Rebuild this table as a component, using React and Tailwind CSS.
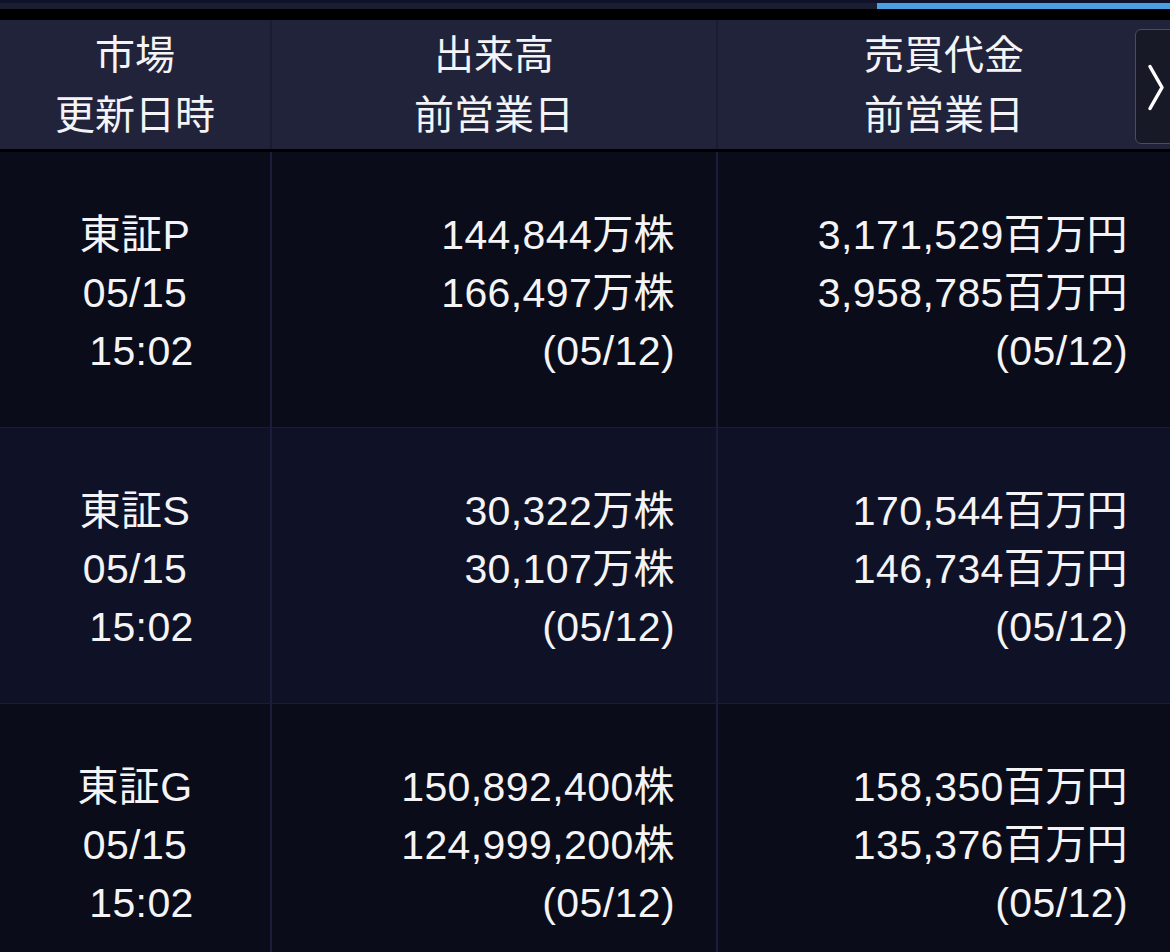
import React from 'react';

const rows = [
  {
    market: '東証P',
    volume: ['144,844万株', '166,497万株'],
    value: ['3,171,529百万円', '3,958,785百万円'],
    bg: 'bg-[#0a0c1a]',
  },
  {
    market: '東証S',
    volume: ['30,322万株', '30,107万株'],
    value: ['170,544百万円', '146,734百万円'],
    bg: 'bg-[#0f1226]',
  },
  {
    market: '東証G',
    volume: ['150,892,400株', '124,999,200株'],
    value: ['158,350百万円', '135,376百万円'],
    bg: 'bg-[#0a0c1a]',
  },
];

const App = () => {
  return (
    <div className="w-[1170px] h-[952px] overflow-hidden bg-black text-[#f4f4f6] font-['Liberation_Sans','Noto_Sans_CJK_JP',sans-serif]">
      {/* top tab strip */}
      <div className="h-[3px] bg-[#10122c]"></div>
      <div className="flex h-[6px]">
        <div className="flex-1 bg-[#1b1d30]"></div>
        <div className="w-[293px] bg-[#4a9fe3]"></div>
      </div>
      <div className="h-[11px] bg-black"></div>

      {/* header */}
      <div className="relative flex h-[129px] bg-[#21233b] text-[40px] leading-[60px] font-['Noto_Sans_CJK_JP',sans-serif]">
        <div className="w-[272px] border-r-2 border-[#1a1c31] flex flex-col items-center justify-center pb-[5px]">
          <div>市場</div>
          <div>更新日時</div>
        </div>
        <div className="w-[446px] border-r-2 border-[#1a1c31] flex flex-col items-center justify-center pb-[5px]">
          <div>出来高</div>
          <div>前営業日</div>
        </div>
        <div className="flex-1 flex flex-col items-center justify-center pb-[5px]">
          <div>売買代金</div>
          <div>前営業日</div>
        </div>

        <button
          type="button"
          className="absolute left-[1135px] top-[9px] w-[44px] h-[115px] rounded-[6px] border border-[#4b4d5f] bg-[#181926]"
        >
          <svg className="absolute left-[11px] top-[34px]" width="18" height="47" viewBox="0 0 18 47" fill="none">
            <path d="M3 2.5 L15 23.5 L3 44.5" stroke="#ffffff" strokeWidth="3.5" strokeLinecap="round" strokeLinejoin="round" />
          </svg>
        </button>
      </div>
      <div className="h-[3px] bg-black"></div>

      {/* body rows */}
      {rows.map((r) => (
        <div key={r.market} className={`flex h-[276px] border-b border-[#1a1d38] ${r.bg} text-[41px] leading-[58px] tracking-[0.4px]`}>
          <div className="w-[272px] border-r-2 border-[#1b1e3a] flex flex-col items-center justify-center pt-[7px]">
            <div>{r.market}</div>
            <div>05/15</div>
            <div className="pl-[13px]">15:02</div>
          </div>
          <div className="w-[446px] border-r-2 border-[#1b1e3a] flex flex-col items-end justify-center pr-[41px] pt-[7px]">
            <div>{r.volume[0]}</div>
            <div>{r.volume[1]}</div>
            <div>(05/12)</div>
          </div>
          <div className="flex-1 flex flex-col items-end justify-center pr-[42px] pt-[7px]">
            <div>{r.value[0]}</div>
            <div>{r.value[1]}</div>
            <div>(05/12)</div>
          </div>
        </div>
      ))}
    </div>
  );
};

export default App;
